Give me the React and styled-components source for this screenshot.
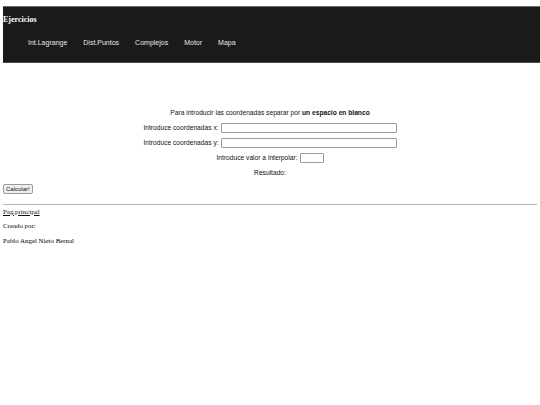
import React from "react";
import styled, { createGlobalStyle } from "styled-components";

const GlobalStyle = createGlobalStyle`
  html, body {
    margin: 0;
    padding: 0;
    background: #ffffff;
  }
  body {
    padding: 0 0 0 3px;
    font-family: "Liberation Serif", "Times New Roman", serif;
    color: #000;
  }
`;

const Header = styled.header`
  margin-top: 6px;
  height: 55px;
  background: #1a1a1a;
  border-top: 1px solid #6a6a6a;
  border-bottom: 1px solid #4a4a4a;
`;

const Title = styled.h1`
  margin: 0;
  padding-top: 8px;
  font-family: "Liberation Serif", "Times New Roman", serif;
  font-size: 8px;
  font-weight: bold;
  line-height: 9px;
  color: #ffffff;
`;

const Nav = styled.ul`
  list-style: none;
  margin: 15px 0 0;
  padding: 0 0 0 25px;
  display: flex;
  gap: 16px;
`;

const NavItem = styled.li`
  font-family: "Liberation Sans", Arial, sans-serif;
  font-size: 7px;
  line-height: 8px;
  color: #e6e6e6;
`;

const Main = styled.main`
  margin-top: 46px;
  padding-right: 3px;
  font-family: "Liberation Sans", Arial, sans-serif;
  font-size: 6.67px;
  color: #111;
`;

const Row = styled.p`
  margin: 0 0 7.1px;
  display: flex;
  justify-content: center;
  align-items: center;
  gap: 2px;
  line-height: 8px;
  height: 8px;
`;

const TextInput = styled.input`
  box-sizing: border-box;
  width: ${props => props.$w}px;
  height: 10px;
  margin: 0;
  padding: 0;
  border: 1px solid #9a9a9a;
  border-radius: 1px;
  background: #fff;
  font-size: 7px;
`;

const Button = styled.button`
  display: block;
  margin: 2.5px 0 0;
  padding: 0 2px;
  height: 10px;
  font-family: "Liberation Sans", Arial, sans-serif;
  font-size: 6px;
  line-height: 8px;
  color: #111;
  background: #efefef;
  border: 1px solid #9a9a9a;
  border-radius: 2px;
`;

const Rule = styled.hr`
  margin: 10px 3px 0 0;
  border: 0;
  border-top: 1px solid #b5b5b5;
`;

const Footer = styled.footer`
  font-family: "Liberation Serif", "Times New Roman", serif;
  font-size: 6.9px;
  line-height: 8px;
`;

const FootLine = styled.p`
  margin: ${props => (props.$first ? "2.5px" : "6.5px")} 0 0;
`;

const Link = styled.a`
  color: #111;
  text-decoration: underline;
`;

export default function App() {
  const links = ["Int.Lagrange", "Dist.Puntos", "Complejos", "Motor", "Mapa"];
  return (
    <>
      <GlobalStyle />
      <Header>
        <Title>Ejercicios</Title>
        <Nav>
          {links.map(l => (
            <NavItem key={l}>{l}</NavItem>
          ))}
        </Nav>
      </Header>
      <Main>
        <Row>
          <span>
            Para introducir las coordenadas separar por{" "}
            <b>un espacio en blanco</b>
          </span>
        </Row>
        <Row>
          Introduce coordenadas x: <TextInput $w={176} />
        </Row>
        <Row>
          Introduce coordenadas y: <TextInput $w={176} />
        </Row>
        <Row>
          Introduce valor a interpolar: <TextInput $w={24} />
        </Row>
        <Row>Resultado:</Row>
        <Button>Calcular!</Button>
      </Main>
      <Rule />
      <Footer>
        <FootLine $first>
          <Link href="#">Pag.principal</Link>
        </FootLine>
        <FootLine>Creado por:</FootLine>
        <FootLine>Pablo Angel Nieto Bernal</FootLine>
      </Footer>
    </>
  );
}
